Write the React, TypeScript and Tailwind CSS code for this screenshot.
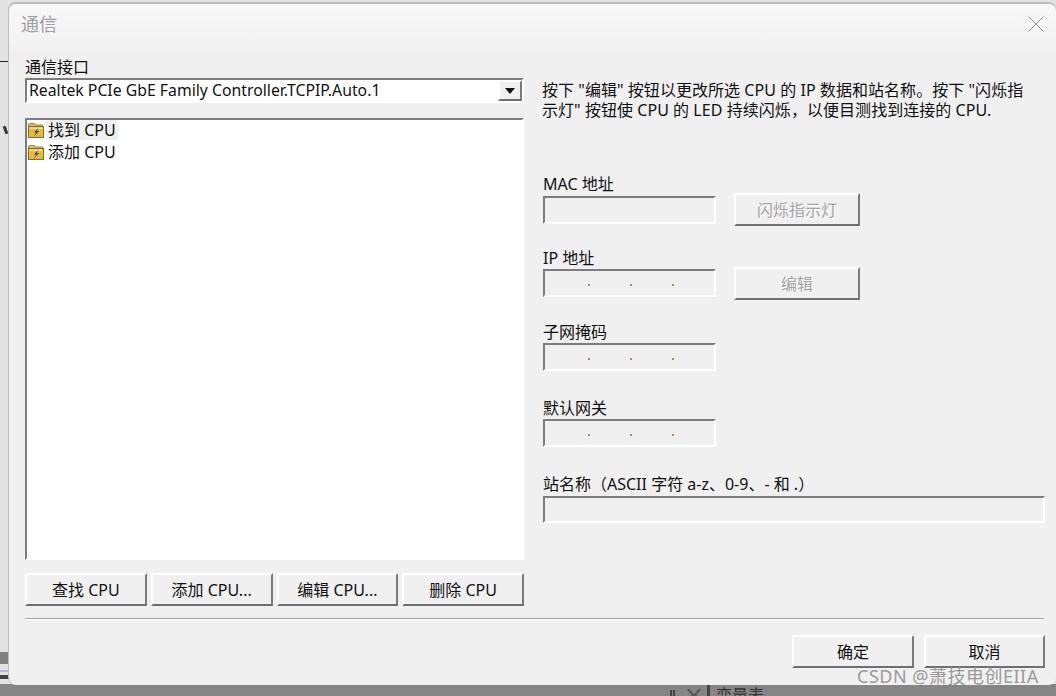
import * as React from "react"

const raised =
  "border-t-2 border-l-2 border-r-2 border-b-2 border-t-white border-l-white border-r-[#7a7a7a] border-b-[#6e6e6e]"
const sunken =
  "border-t-2 border-l-2 border-r-2 border-b-2 border-t-[#7d7d7d] border-l-[#7d7d7d] border-r-white border-b-white"

function FolderIcon() {
  return (
    <svg width="16" height="15" viewBox="0 0 16 15" className="shrink-0">
      <path d="M0.5 3 V1 L1.5 0.5 H6.5 L7.5 2 H14.5 V4 H0.5 Z" fill="#cdbb8c" stroke="#8f8668" />
      <rect x="0.5" y="3.5" width="15" height="11" fill="#efb92c" stroke="#8a6c1c" />
      <path d="M1.5 4.5 H14.5 V6 H1.5 Z" fill="#fbe6a0" />
      <path d="M10.5 4.5 L6 9.5 H8.2 L5.8 13.5 L11.2 8 H8.8 Z" fill="#1b45c9" />
    </svg>
  )
}

function ActionButton({
  children,
  className = "",
  disabled,
}: {
  children: React.ReactNode
  className?: string
  disabled?: boolean
}) {
  return (
    <button
      type="button"
      className={`${raised} flex items-center justify-center bg-[#f0f0f0] ${
        disabled ? "text-[#a3a3a3] [text-shadow:1px_1px_0_#ffffff]" : "text-[#111111]"
      } ${className}`}
    >
      {children}
    </button>
  )
}

function IpField({ className = "" }: { className?: string }) {
  return (
    <div className={`${sunken} flex h-[28px] w-[173px] items-end gap-[40px] pb-[9px] pl-[43px] ${className}`}>
      <span className="size-[2px] bg-[#b08a5a]" />
      <span className="size-[2px] bg-[#b08a5a]" />
      <span className="size-[2px] bg-[#b08a5a]" />
    </div>
  )
}

function FieldLabel({ children, className = "" }: { children: React.ReactNode; className?: string }) {
  return <div className={`h-[19px] leading-[20px] text-[#111111] ${className}`}>{children}</div>
}

export default function App() {
  return (
    <div
      className="relative h-[696px] w-[1056px] overflow-hidden bg-[#e2e2e2] pl-[8px] pt-[2px] text-[16px]"
      style={{ fontFamily: '"Noto Sans", "Noto Sans CJK SC", sans-serif' }}
    >
      {/* window behind the dialog */}
      <div className="absolute inset-x-0 bottom-0 h-[12px] bg-[#858585]" />
      <div className="absolute left-0 top-[652px] h-[12px] w-[8px] bg-[#808080]" />
      <div className="absolute left-0 top-[670px] h-[2px] w-[10px] bg-[#b4bfd8]" />
      <div className="absolute left-0 top-[675px] h-[4px] w-[10px] bg-[#444444]" />
      <div className="absolute left-0 top-[61px] h-[1px] w-[8px] bg-[#222222]" />
      <div className="absolute left-[4px] top-[126px] h-[8px] w-[3px] rotate-[-20deg] bg-[#333333]" />
      <div className="absolute left-[670px] top-[690px] h-[6px] w-[5px] border-x-2 border-[#444444]" />
      <svg width="14" height="10" viewBox="0 0 14 10" className="absolute left-[687px] top-[689px]">
        <path d="M1 0 L7 7 L13 0 M5 7 L1 10 M9 7 L13 10" stroke="#555555" strokeWidth="2" fill="none" />
      </svg>
      <div className="absolute bottom-0 left-[707px] flex h-[11px] items-start overflow-hidden border-l-[3px] border-[#444444] pl-[6px] text-[16px] leading-[20px] text-[#333333]">
        变量表
      </div>

      <div className="relative flex h-[683px] w-[1048px] flex-col rounded-[8px] border-t-2 border-l border-[#bdbdbd] bg-[#f0f0f0]">
        <div className="flex h-[53px] shrink-0 items-start justify-between rounded-t-[8px] bg-gradient-to-b from-[#f8f8f8] to-[#f0f0f0] pl-[12px] pr-[12px] pt-[8px]">
          <span className="text-[18px] leading-[24px] text-[#a0a0a0]">通信</span>
          <svg width="16" height="16" viewBox="0 0 16 16" className="mt-[4px]">
            <path d="M0.5 0.5 L15.5 15.5 M15.5 0.5 L0.5 15.5" stroke="#8c8c8c" strokeWidth="1" />
          </svg>
        </div>

        <div className="flex flex-1 flex-col pl-[16px]">
          <div className="flex h-[549px] shrink-0">
            <div className="flex w-[499px] shrink-0 flex-col">
              <div className="h-[20px] leading-[20px] text-[#111111]">通信接口</div>
              <div className={`${sunken} mt-[1px] flex h-[25px] shrink-0 items-center justify-between bg-white pl-[2px]`}>
                <span className="pt-[1px] text-[15.8px] leading-none text-[#111111]">
                  Realtek PCIe GbE Family Controller.TCPIP.Auto.1
                </span>
                <span className={`${raised} flex h-[21px] w-[24px] items-center justify-center bg-[#f0f0f0]`}>
                  <svg width="10" height="6" viewBox="0 0 10 6">
                    <path d="M0 0 H10 L5 6 Z" fill="#111111" />
                  </svg>
                </span>
              </div>
              <div className={`${sunken} mt-[15px] h-[442px] shrink-0 bg-white pl-[1px]`}>
                <div className="-mt-px flex h-[22px] items-center gap-[2px] leading-none text-[#111111]">
                  <FolderIcon />
                  <span className="bg-[#f0f0f0] px-[2px] py-[2px]">找到 CPU</span>
                </div>
                <div className="flex h-[22px] items-center gap-[2px] leading-none text-[#111111]">
                  <FolderIcon />
                  <span className="px-[2px] py-[2px]">添加 CPU</span>
                </div>
              </div>
              <div className="mt-[13px] flex gap-[4px]">
                <ActionButton className="h-[33px] w-[122px]">查找 CPU</ActionButton>
                <ActionButton className="h-[33px] w-[122px]">添加 CPU...</ActionButton>
                <ActionButton className="h-[33px] w-[122px]">编辑 CPU...</ActionButton>
                <ActionButton className="h-[33px] w-[122px]">删除 CPU</ActionButton>
              </div>
            </div>

            <div className="ml-[19px] flex w-[502px] shrink-0 flex-col">
              <p className="-ml-px mt-[23px] h-[94px] whitespace-nowrap text-[16px] leading-[20px] tracking-[0.05px] text-[#111111]">
                按下 "编辑" 按钮以更改所选 CPU 的 IP 数据和站名称。按下 "闪烁指
                <br />
                示灯" 按钮使 CPU 的 LED 持续闪烁，以便目测找到连接的 CPU.
              </p>
              <FieldLabel>MAC 地址</FieldLabel>
              <div className="flex items-start gap-[18px]">
                <div className={`${sunken} mt-[3px] h-[28px] w-[173px]`} />
                <ActionButton disabled className="h-[33px] w-[126px]">
                  闪烁指示灯
                </ActionButton>
              </div>
              <FieldLabel className="mt-[22px]">IP 地址</FieldLabel>
              <div className="flex items-start gap-[18px]">
                <IpField className="mt-[2px]" />
                <ActionButton disabled className="h-[33px] w-[126px]">
                  编辑
                </ActionButton>
              </div>
              <FieldLabel className="mt-[22px]">子网掩码</FieldLabel>
              <IpField className="mt-[2px]" />
              <FieldLabel className="mt-[27px]">默认网关</FieldLabel>
              <IpField className="mt-[2px]" />
              <FieldLabel className="mt-[27px]">站名称（ASCII 字符 a-z、0-9、- 和 .）</FieldLabel>
              <div className={`${sunken} mt-[3px] h-[27px] w-[502px]`} />
            </div>
          </div>

          <div className="mt-[12px] h-[2px] w-[1019px] border-t border-b border-t-[#a0a0a0] border-b-white" />
          <div className="mt-[15px] flex w-[1020px] justify-end gap-[10px]">
            <ActionButton className="h-[33px] w-[122px]">确定</ActionButton>
            <ActionButton className="h-[33px] w-[121px]">取消</ActionButton>
          </div>
        </div>
      </div>

      <div className="absolute bottom-[11px] left-[857px] text-[18px] leading-none tracking-[0.5px] text-[#9a9a9a]">
        CSDN @萧技电创EIIA
      </div>
    </div>
  )
}
